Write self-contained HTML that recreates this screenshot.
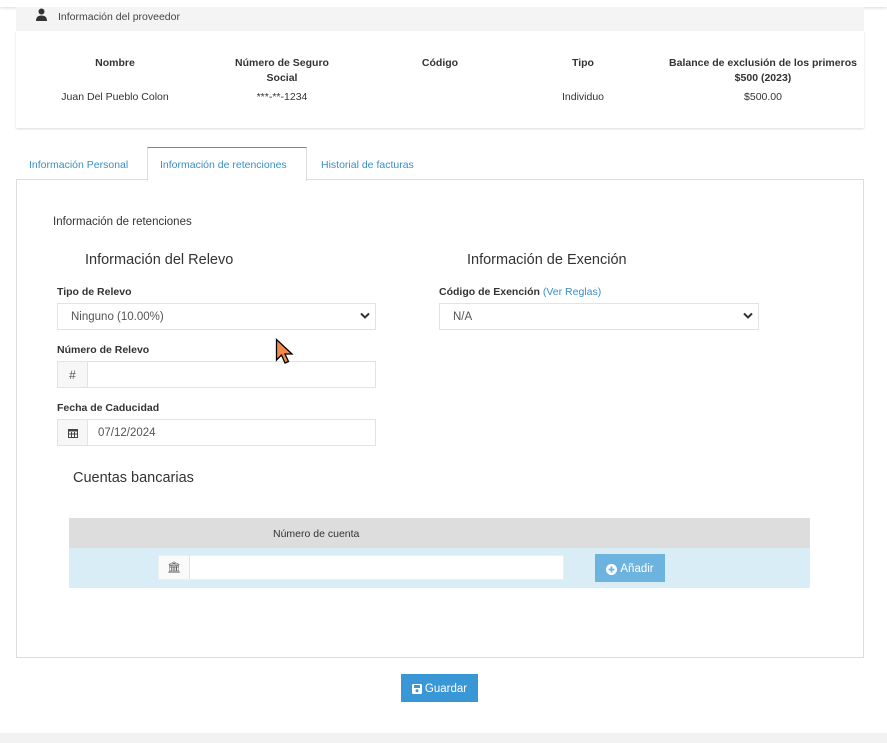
<!DOCTYPE html>
<html><head><meta charset="utf-8"><style>
*{box-sizing:border-box;margin:0;padding:0}
body{width:887px;height:743px;position:relative;background:#fff;font-family:"Liberation Sans",sans-serif;color:#333;overflow:hidden}
.a{position:absolute}
.t{font-size:10.5px;white-space:nowrap}
.b{font-weight:bold}
.c{text-align:center}
.inp{position:absolute;border:1px solid #e3e3e3;background:#fff;font-size:11.5px;color:#555}
.add{position:absolute;left:0;top:0;bottom:0;width:30px;border-right:1px solid #e3e3e3;background:#f7f7f7;display:flex;align-items:center;justify-content:center;font-size:12px;color:#555}
</style></head><body>
<div class="a" style="left:0;top:0;width:887px;height:7px;background:#fff;box-shadow:0 1px 3px rgba(0,0,0,.15)"></div>
<div class="a" style="left:16px;top:7px;width:848px;height:24px;background:#f4f4f4"></div>
<svg class="a" style="left:35px;top:8px" width="13" height="14" viewBox="0 0 13 14"><circle cx="6.5" cy="3.5" r="3" fill="#333"/><path d="M1 13 Q1 7.5 6.5 7.5 Q12 7.5 12 13Z" fill="#333"/></svg>
<div class="a t" style="left:58px;top:11px;color:#444">Información del proveedor</div>
<div class="a" style="left:16px;top:31px;width:848px;height:97px;background:#fff;box-shadow:0 1px 2px rgba(0,0,0,.15)"></div>
<div class="a t b c" style="left:65px;top:57px;width:100px">Nombre</div>
<div class="a t b c" style="left:232px;top:56px;width:100px;white-space:normal;line-height:15px">Número de Seguro Social</div>
<div class="a t b c" style="left:390px;top:57px;width:100px">Código</div>
<div class="a t b c" style="left:533px;top:57px;width:100px">Tipo</div>
<div class="a t b c" style="left:660px;top:56px;width:206px;white-space:normal;line-height:15px">Balance de exclusión de los primeros $500 (2023)</div>
<div class="a t c" style="left:50px;top:91px;width:130px">Juan Del Pueblo Colon</div>
<div class="a t c" style="left:232px;top:91px;width:100px">***-**-1234</div>
<div class="a t c" style="left:533px;top:91px;width:100px">Individuo</div>
<div class="a t c" style="left:713px;top:91px;width:100px">$500.00</div>
<div class="a t" style="left:29px;top:159px;color:#3a8fc4">Información Personal</div>
<div class="a" style="left:16px;top:179px;width:848px;height:479px;border:1px solid #ddd"></div>
<div class="a" style="left:147px;top:147px;width:160px;height:34px;background:#fff;border-left:1px solid #ddd;border-right:1px solid #ddd;border-top:1px solid #3a97d6"></div>
<div class="a t" style="left:160px;top:159px;color:#3a8fc4">Información de retenciones</div>
<div class="a t" style="left:321px;top:159px;color:#3a8fc4">Historial de facturas</div>
<div class="a" style="left:53px;top:216px;font-size:11.5px">Información de retenciones</div>
<div class="a" style="left:85px;top:252px;font-size:14.5px;color:#333">Información del Relevo</div>
<div class="a" style="left:467px;top:252px;font-size:14.5px;color:#333">Información de Exención</div>
<div class="a t b" style="left:57px;top:286px">Tipo de Relevo</div>
<div class="inp" style="left:57px;top:303px;width:319px;height:27px;padding:7px 0 0 13px">Ninguno (10.00%)</div>
<div class="a t b" style="left:439px;top:286px">Código de Exención <span style="font-weight:normal;color:#3a8fc4">(Ver Reglas)</span></div>
<div class="inp" style="left:439px;top:303px;width:320px;height:27px;padding:7px 0 0 13px">N/A</div>
<svg class="a" style="left:360px;top:312px" width="10" height="8"><path d="M1 1.5 L5 5.5 L9 1.5" stroke="#333" stroke-width="2" fill="none"/></svg>
<svg class="a" style="left:743px;top:312px" width="10" height="8"><path d="M1 1.5 L5 5.5 L9 1.5" stroke="#333" stroke-width="2" fill="none"/></svg>
<div class="a t b" style="left:57px;top:344px">Número de Relevo</div>
<div class="inp" style="left:57px;top:361px;width:319px;height:27px"><div class="add">#</div></div>
<div class="a t b" style="left:57px;top:402px">Fecha de Caducidad</div>
<div class="inp" style="left:57px;top:419px;width:319px;height:27px;padding:7px 0 0 40px"><div class="add"><svg width="10" height="10"><rect x="0.5" y="1.5" width="9" height="8" fill="none" stroke="#444"/><rect x="0.5" y="1.5" width="9" height="2" fill="#444"/><path d="M3.5 4v5M6.5 4v5M1 6h8" stroke="#444"/></svg></div>07/12/2024</div>
<div class="a" style="left:73px;top:470px;font-size:14.5px">Cuentas bancarias</div>
<div class="a" style="left:69px;top:518px;width:741px;height:30px;background:#ddd"></div>
<div class="a t" style="left:273px;top:528px">Número de cuenta</div>
<div class="a" style="left:69px;top:548px;width:741px;height:40px;background:#d9edf7"></div>
<div class="inp" style="left:158px;top:555px;width:406px;height:25px;border-color:#eee"><div class="add" style="width:31px;background:#fafafa;font-size:11px">&#127963;</div></div>
<div class="a" style="left:595px;top:554px;width:70px;height:28px;background:#6cb3e0;color:#fff;font-size:11.5px;display:flex;align-items:center;justify-content:center;gap:3px;padding-top:2px"><svg width="11" height="11"><circle cx="5.5" cy="5.5" r="5.5" fill="#fff"/><path d="M5.5 2.5v6M2.5 5.5h6" stroke="#6cb3e0" stroke-width="1.8"/></svg>Añadir</div>
<div class="a" style="left:401px;top:674px;width:77px;height:28px;background:#3a97d6;color:#fff;font-size:11.5px;display:flex;align-items:center;justify-content:center;gap:3px;padding-top:2px"><svg width="10" height="10"><rect width="10" height="10" rx="1.5" fill="#fff"/><rect x="2" y="1" width="6" height="3" fill="#3a97d6"/><circle cx="5" cy="6.8" r="1.5" fill="#3a97d6"/></svg>Guardar</div>
<svg class="a" style="left:275px;top:338px" width="20" height="30"><path d="M1.5 1.5 L1.5 22 L6.5 17 L10 25 L13.5 23.5 L10 16 L17 16 Z" fill="#f08a4b" stroke="#000" stroke-width="1.3"/></svg>
<div class="a" style="left:0;top:733px;width:887px;height:10px;background:#f2f2f2"></div>
</body></html>
